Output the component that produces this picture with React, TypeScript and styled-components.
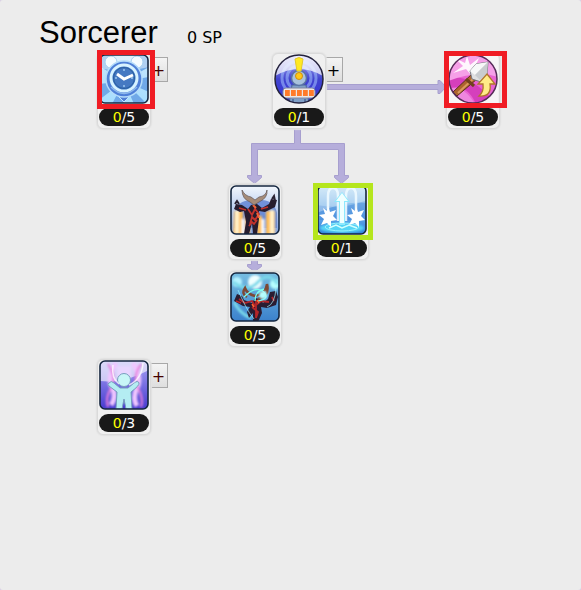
import React from "react";
import styled, { createGlobalStyle } from "styled-components";

const GlobalStyle = createGlobalStyle`
  body {
    margin: 0;
    background: #d9cfe4;
    color: #000;
    font-family: "DejaVu Sans", Verdana, sans-serif;
  }
`;

const Panel = styled.main`
  box-sizing: border-box;
  min-height: 100vh;
  padding: 15px 16px 16px 39px;
  background: #ececec;
  border-radius: 3px;
`;

const Header = styled.header`
  display: flex;
  align-items: baseline;
  gap: 29px;
  padding-bottom: 2px;
`;

const Title = styled.h1`
  margin: 0;
  font: 400 31px/36px "Liberation Sans", Arial, sans-serif;
`;

const Points = styled.span`
  font-size: 16px;
  line-height: 20px;
`;

const Tree = styled.section`
  display: grid;
  grid-template-columns: repeat(3, 44px 43px 44px);
  grid-template-rows: repeat(3, 44px 43px 44px);
  margin-left: 58px;
`;

const Links = styled.svg`
  grid-area: 1 / 1 / -1 / -1;
  width: 100%;
  height: 100%;
  fill: #b6aedb;
  stroke: #a79fcf;
`;

const Node = styled.div<{ $col: number; $row: number }>`
  grid-column: ${(p) => p.$col} / span 1;
  grid-row: ${(p) => p.$row} / span 2;
  display: flex;
  align-items: flex-start;
  width: max-content;
`;

const Card = styled.div`
  position: relative;
  z-index: 1;
  box-sizing: border-box;
  display: flex;
  flex-direction: column;
  gap: 4px;
  width: 54px;
  padding: 0 1px 2px;
  border: 1px solid #dadada;
  border-radius: 6px;
  background: #f0f0f0;
  box-shadow: 0 0 1px 1px #e2e2e2;
`;

const Icon = styled.svg`
  display: block;
  width: 50px;
  height: 50px;
`;

const Level = styled.div`
  border-radius: 9px;
  background: #191919;
  color: #fff;
  font-size: 14px;
  line-height: 18px;
  text-align: center;
`;

const Current = styled.span`
  color: #ff0;
`;

const AddButton = styled.button`
  width: 19px;
  height: 25px;
  margin: 4px 0 0 -2px;
  padding: 0;
  border: 1px solid #a8a8a8;
  border-radius: 0;
  background: linear-gradient(#f4f4f4, #dedede);
  color: #000;
  font: 16px/25px "DejaVu Sans", Verdana, sans-serif;

  &:disabled {
    color: #400;
  }
`;

type Mark = "skip" | "skipWide" | "pick";

const marks = {
  skip: { color: "#f01c24", inset: "-4px -5px auto -1px", height: 59, line: 5 },
  skipWide: { color: "#f01c24", inset: "-3px -8px auto -3px", height: 57, line: 5 },
  pick: { color: "#b5e61d", inset: "-2px -5px auto -3px", height: 57, line: 5 },
};

const Highlight = styled.span<{ $mark: Mark }>`
  position: absolute;
  inset: ${(p) => marks[p.$mark].inset};
  box-sizing: border-box;
  height: ${(p) => marks[p.$mark].height}px;
  border: ${(p) => marks[p.$mark].line}px solid ${(p) => marks[p.$mark].color};
`;

const Tile = ({ id, from, to, children }: { id: string; from: string; to: string; children: React.ReactNode }) => (
  <Icon viewBox="0 0 50 50" aria-hidden="true">
    <defs>
      <linearGradient id={id} x1="0" y1="0" x2="0" y2="1">
        <stop offset="0" stopColor={from} />
        <stop offset="1" stopColor={to} />
      </linearGradient>
      <clipPath id={`${id}-clip`}>
        <rect x="1" y="1" width="48" height="48" rx="5" />
      </clipPath>
      <filter id={`${id}-soft`} x="-30%" y="-30%" width="160%" height="160%">
        <feGaussianBlur stdDeviation="1.3" />
      </filter>
      <filter id={`${id}-smooth`}>
        <feGaussianBlur stdDeviation="0.5" />
      </filter>
    </defs>
    <g clipPath={`url(#${id}-clip)`}>
      <rect width="50" height="50" fill={`url(#${id})`} />
      {children}
    </g>
    <rect x="1" y="1" width="48" height="48" rx="5" fill="none" stroke="#14263f" strokeWidth="1.6" />
  </Icon>
);

const ClockIcon = () => (
  <Tile id="clock" from="#c9e6fa" to="#a5deff">
    <g fill="#6fa9e8" filter="url(#clock-smooth)">
      <path d="M25 27 0 12V0h9zM25 27 41 0h9v13zM25 27 50 23v15zM25 27 48 50H35zM25 27 25 50H13zM25 27 0 46V30z" />
    </g>
    <path d="M0 0h50v13Q25 20 0 14z" fill="#fff" opacity=".45" />
    <g fill="#f4fbff" stroke="#a4cdef">
      <circle cx="12" cy="8" r="6" />
      <circle cx="38" cy="8" r="6" />
    </g>
    <g filter="url(#clock-smooth)">
      <path d="m17 40 8 8 8-8z" fill="#5180d6" stroke="#c3e5ff" />
      <circle cx="25" cy="25" r="18" fill="#4f80d8" stroke="#b5dcfa" strokeWidth="1.5" />
      <circle cx="25" cy="24" r="13" fill="#3f76c4" stroke="#d8f3ff" strokeWidth="3" />
      <circle cx="25" cy="24" r="10.500" fill="#4479c2" stroke="#2b5f9f" />
    </g>
    <path d="M25 15v2M25 31v2M16 24h2M32 24h2" stroke="#9cc9ef" strokeWidth="1.5" />
    <path d="m18 20 7 5 9-4" fill="none" stroke="#fff" strokeWidth="3" />
    <path d="M12 33q13 13 26 0" fill="none" stroke="#8db8ec" strokeWidth="1.5" />
  </Tile>
);

const AlarmIcon = () => (
  <Icon viewBox="0 0 50 50" aria-hidden="true">
    <defs>
      <linearGradient id="alarm" x1="0" y1="0" x2="0" y2="1">
        <stop offset="0" stopColor="#c8c8f8" />
        <stop offset=".5" stopColor="#4144cf" />
        <stop offset="1" stopColor="#3431d9" />
      </linearGradient>
      <clipPath id="alarm-clip">
        <circle cx="25" cy="25" r="24" />
      </clipPath>
    </defs>
    <g clipPath="url(#alarm-clip)">
      <rect width="50" height="50" fill="url(#alarm)" />
      <g fill="none" stroke="#a5c4ff" strokeWidth="3" opacity=".55">
        <circle cx="25" cy="24" r="12" />
        <circle cx="25" cy="24" r="17" />
      </g>
      <path d="M1 22C4 7 13 1 25 1s21 6 24 21Q25 8 1 22" fill="#fff" opacity=".7" />
      <path d="m18 31-3 19h20l-3-19z" fill="#7f9fc6" stroke="#4a6495" />
      <circle cx="25" cy="24" r="7.500" fill="#a9c2dc" stroke="#5a74a4" strokeWidth="1.5" />
      <rect x="9" y="34" width="32" height="10" rx="3" fill="#ece6e4" stroke="#8088a4" />
      <path d="M11 39h29" stroke="#ff7b2a" strokeWidth="6" strokeDasharray="4.800 1.200" />
      <path d="M19 45v5M31 45v5" stroke="#4a6495" strokeWidth="1.5" />
    </g>
    <circle cx="25" cy="25" r="24" fill="none" stroke="#24223c" strokeWidth="1.5" />
    <path d="M21 5q4-3 8 0l-2 12h-4z" fill="#ffe924" stroke="#e3c92b" />
    <circle cx="25" cy="22" r="3.500" fill="#ffc817" stroke="#cf8e0d" />
  </Icon>
);

const StaffIcon = () => (
  <Icon viewBox="0 0 50 50" aria-hidden="true">
    <clipPath id="staff-clip">
      <circle cx="25" cy="25" r="24" />
    </clipPath>
    <rect width="50" height="50" fill="#f7f5f6" />
    <g clipPath="url(#staff-clip)">
      <rect width="50" height="50" fill="#e963d2" />
      <path d="M0 35Q15 30 27 50H0z" fill="#ee86df" />
      <path d="M0 25Q20 17 49 50H28Q18 28 0 35z" fill="#d53fbc" />
      <path d="M0 20V0h50v23Q30 16 0 27z" fill="#f5a0e8" />
      <path d="m19 2 3 9 9-7-4 9-3 9-6-7-13 4 10-7-8-8 10 5z" fill="#fff" opacity=".9" />
      <path d="m9 42-4-4 19-18 5 5z" fill="#ad642d" stroke="#56301d" />
      <path d="m10 39 15-14" stroke="#d99a5d" strokeWidth="2" />
      <path d="m18 25 8 7" stroke="#70411e" strokeWidth="3" />
      <path d="m22 17 6-7 12-2-1 12-6 8-9-3z" fill="#dfe0e1" stroke="#797980" />
      <path d="m40 8-13 13-5-4 6-7z" fill="#f7f8f8" />
      <path d="m40 8-13 13 5 5 7-6z" fill="#c9cccf" />
    </g>
    <circle cx="25" cy="25" r="24" fill="none" stroke="#552b58" strokeWidth="1.5" />
    <path d="m39 20 8 10h-5q2 13-11 12 5-4 4-12h-5z" fill="#ffec87" stroke="#b1752c" strokeWidth="1.3" />
  </Icon>
);

const DemonIcon = () => (
  <Tile id="demon" from="#f4f8fd" to="#7d9fe0">
    <path d="M4 29q3-15 20-14 20-2 23 13v15H4z" fill="#5479d0" opacity=".75" />
    <g filter="url(#demon-soft)">
      <path d="M4 26h9v24H3zM15 31h5v19h-5zM27 31h5v19h-5zM36 26h9v24h-9z" fill="#ffbf5a" />
      <path d="M7 25v24M42 25v24" stroke="#fff0c8" strokeWidth="4" />
      <path d="M33 34v16M13 34v16" stroke="#fff" strokeWidth="3" />
    </g>
    <g filter="url(#demon-smooth)">
      <path d="m4 24 2-5 6 1 6 4 3-4 6-1 5 4 7-4 2-5 6 1-2 7-10 5-6-1v8l-2 15h-4l-1-11-3 11h-5l2-12-2-11-4 1-6-3z" fill="#271b2d" />
      <path d="m18 24 4 6 3-6 4 5-4 6-3-3-2 7M19 41l3-4 2 2 3-4M9 23l7 2M31 24l7-2" fill="none" stroke="#c2332d" strokeWidth="1.8" />
      <path d="m23 20 3 3M27 28l2 5" stroke="#f26236" strokeWidth="2" />
      <path d="M20 17Q12 14 12 5q3 6 9 7l4 3 4-3q7-1 8-7 1 8-8 12l-5 3z" fill="#a58b79" stroke="#61575a" strokeWidth=".7" />
      <path d="m5 19 2-3 2 3M42 14l2-3 1 5" fill="none" stroke="#292233" strokeWidth="2" />
    </g>
  </Tile>
);

const LiftIcon = () => (
  <Tile id="lift" from="#c6e4f6" to="#2a80dc">
    <path d="M0 20Q25 25 50 15v20H0z" fill="#3d82d8" opacity=".45" />
    <path d="M0 0h50v18Q28 15 0 28z" fill="#fff" opacity=".3" />
    <g filter="url(#lift-soft)">
      <ellipse cx="25" cy="43" rx="22" ry="5" fill="#55d4f5" />
    </g>
    <ellipse cx="25" cy="42" rx="17" ry="4" fill="none" stroke="#97f3ff" />
    <path d="M11 31V11q0-8 5-8t5 8v25M29 36V11q0-8 5-8t5 8v20" fill="none" stroke="#eefaff" strokeWidth="2.500" opacity=".9" />
    <path d="m25 7 8 10h-5v23h-6V17h-5z" fill="#8de9fd" filter="url(#lift-smooth)" />
    <path d="m25 8 6 8h-4v22h-4V16h-4z" fill="#f0ffff" />
    <g fill="#fff" filter="url(#lift-smooth)">
      <path d="m11 21 2 6 6-2-3 6 4 4-6 1v6l-4-4-6 2 3-6-5-4 6-1-2-6 4 3z" />
      <path d="m39 21 2 6 6-2-3 6 4 4-6 1v6l-4-4-6 2 3-6-5-4 6-1-2-6 4 3z" />
    </g>
    <path d="m12 43 7-3 6 3 7-3 8 3" fill="none" stroke="#d2ffff" strokeWidth="1.5" />
  </Tile>
);

const EnergyIcon = () => (
  <Tile id="energy" from="#78bfe2" to="#3a80cc">
    <g filter="url(#energy-soft)" fill="none">
      <circle cx="25" cy="10" r="7" fill="#f0ffff" />
      <circle cx="7" cy="10" r="5" fill="#b6f3ff" />
      <circle cx="45" cy="12" r="5" fill="#b6ffff" />
      <path d="M3 10Q18 21 28 10T48 12M4 30q6 12 17 16" stroke="#7ad9ea" strokeWidth="3" />
    </g>
    <g filter="url(#energy-smooth)">
      <path d="m4 29 3-7 5 2 2 4 8 3 3-5 5 1 3 4 5-4 2-7 6-1 2 6-2 8-9 3-6-1 1 6-4 9h-5v-9l-4 5-2-6 3-5-7-1z" fill="#2b1c30" />
      <path d="m9 27 6 4 7-2 3 5 6-5 8 1M26 28v18M22 35l6 5-2 6M42 25l2 4M6 29l5 2" fill="none" stroke="#b3262c" strokeWidth="1.8" />
      <path d="M17 25q-6-3-2-9 2 6 10 8 11-2 12-12 3 12-9 15" fill="none" stroke="#7d4936" strokeWidth="2.500" />
      <path d="M14 25q12-12 20-5 6 7-6 9M34 17q-9 2-9 12" fill="none" stroke="#7affee" strokeWidth="1.3" />
    </g>
    <circle cx="33" cy="23" r="4" fill="#b5ffff" filter="url(#energy-soft)" />
    <path d="M8 18q3 7 7 15T24 47M46 16q-1 16-9 19" fill="none" stroke="#9df5ff" opacity=".7" />
    <path d="m27 28 2 3M22 32l2 3" stroke="#ff6530" strokeWidth="1.5" />
  </Tile>
);

const AuraIcon = () => (
  <Tile id="aura" from="#a9a6f4" to="#4538cf">
    <path d="M0 0h50v10Q25 24 0 21z" fill="#fff" opacity=".6" />
    <g filter="url(#aura-soft)" fill="none">
      <path d="M12 45q6-8 1-18T17 3M38 46q-5-8 0-18T34 3" stroke="#efc6ff" strokeWidth="5" />
      <path d="M9 4q9 14 3 24t-3 19M42 4q-9 13-3 24t3 19" stroke="#e67fdc" strokeWidth="2" />
      <path d="M18 6h14v12H18z" fill="#e8d6ff" />
    </g>
    <g filter="url(#aura-smooth)">
      <path d="M10 23q2-3 5 0l6 5h8l6-5q4-3 5 0 1 2-8 9l1 17h-6l-2-10-2 10h-6l1-17-8-6q-2-2 0-3z" fill="#b4edf2" stroke="#779dbd" />
      <circle cx="25" cy="20" r="6.500" fill="#c8f6f7" stroke="#779dbd" />
    </g>
    <path d="M14 5q-2 13 6 19M44 3q-1 16-14 22" fill="none" stroke="#fff" strokeWidth="1.5" opacity=".75" />
  </Tile>
);

interface Skill {
  name: string;
  col: number;
  row: number;
  max: number;
  icon: React.ComponentType;
  add?: "open" | "locked";
  mark?: Mark;
}

const skills: Skill[] = [
  { name: "Time Acceleration", col: 1, row: 1, max: 5, icon: ClockIcon, add: "locked", mark: "skip" },
  { name: "Summon Alarm", col: 5, row: 1, max: 1, icon: AlarmIcon, add: "open" },
  { name: "Staff Mastery", col: 9, row: 1, max: 5, icon: StaffIcon, mark: "skipWide" },
  { name: "Demon Pillars", col: 4, row: 4, max: 5, icon: DemonIcon },
  { name: "Rising Light", col: 6, row: 4, max: 1, icon: LiftIcon, mark: "pick" },
  { name: "Demon Energy", col: 4, row: 6, max: 5, icon: EnergyIcon },
  { name: "Aura", col: 1, row: 8, max: 3, icon: AuraIcon, add: "locked" },
];

export default function App() {
  return (
    <>
      <GlobalStyle />
      <Panel>
        <Header>
          <Title>Sorcerer</Title>
          <Points>0 SP</Points>
        </Header>
        <Tree>
          <Links viewBox="97 53 393 393" aria-hidden="true">
            <path d="M325 84.500h113v-4l2 0 6 6.500-6 6.500h-2v-4H325z" />
            <path d="M294.500 128v15.500h-43v32h-4v2l7 6 7-6v-2h-4v-26h81v26h-4v2l7 6 7-6v-2h-4v-32h-44V128z" />
            <path d="M251.500 258v6.500h-4v2l7 5 7-5v-2h-4V258z" />
          </Links>
          {skills.map(({ name, col, row, max, icon: SkillIcon, add, mark }) => (
            <Node key={name} $col={col} $row={row}>
              <Card>
                <SkillIcon />
                <Level>
                  <Current>0</Current>/{max}
                </Level>
                {mark && <Highlight $mark={mark} />}
              </Card>
              {add && (
                <AddButton type="button" aria-label={`Add a point to ${name}`} disabled={add === "locked"}>
                  +
                </AddButton>
              )}
            </Node>
          ))}
        </Tree>
      </Panel>
    </>
  );
}
